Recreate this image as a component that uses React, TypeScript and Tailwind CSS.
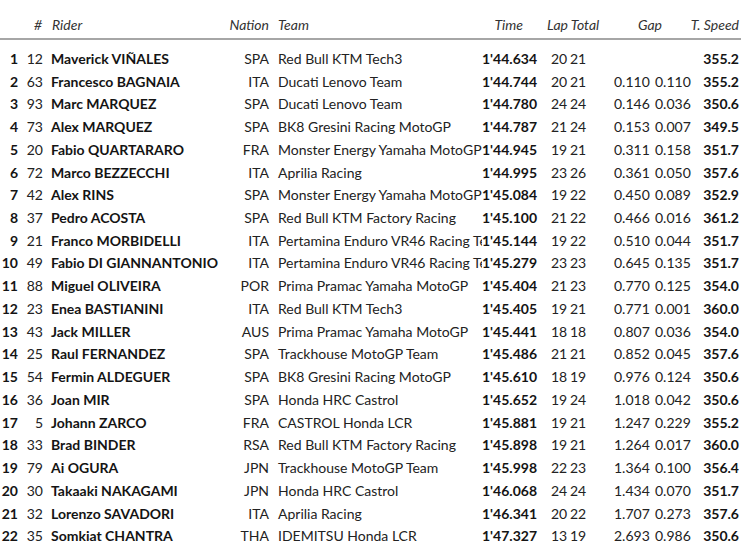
const rows: [number, number, string, string, string, string, number, number, string, string, string][] = [
  [1, 12, "Maverick VIÑALES", "SPA", "Red Bull KTM Tech3", "1'44.634", 20, 21, "", "", "355.2"],
  [2, 63, "Francesco BAGNAIA", "ITA", "Ducati Lenovo Team", "1'44.744", 20, 21, "0.110", "0.110", "355.2"],
  [3, 93, "Marc MARQUEZ", "SPA", "Ducati Lenovo Team", "1'44.780", 24, 24, "0.146", "0.036", "350.6"],
  [4, 73, "Alex MARQUEZ", "SPA", "BK8 Gresini Racing MotoGP", "1'44.787", 21, 24, "0.153", "0.007", "349.5"],
  [5, 20, "Fabio QUARTARARO", "FRA", "Monster Energy Yamaha MotoGP", "1'44.945", 19, 21, "0.311", "0.158", "351.7"],
  [6, 72, "Marco BEZZECCHI", "ITA", "Aprilia Racing", "1'44.995", 23, 26, "0.361", "0.050", "357.6"],
  [7, 42, "Alex RINS", "SPA", "Monster Energy Yamaha MotoGP", "1'45.084", 19, 22, "0.450", "0.089", "352.9"],
  [8, 37, "Pedro ACOSTA", "SPA", "Red Bull KTM Factory Racing", "1'45.100", 21, 22, "0.466", "0.016", "361.2"],
  [9, 21, "Franco MORBIDELLI", "ITA", "Pertamina Enduro VR46 Racing Team", "1'45.144", 19, 22, "0.510", "0.044", "351.7"],
  [10, 49, "Fabio DI GIANNANTONIO", "ITA", "Pertamina Enduro VR46 Racing Team", "1'45.279", 23, 23, "0.645", "0.135", "351.7"],
  [11, 88, "Miguel OLIVEIRA", "POR", "Prima Pramac Yamaha MotoGP", "1'45.404", 21, 23, "0.770", "0.125", "354.0"],
  [12, 23, "Enea BASTIANINI", "ITA", "Red Bull KTM Tech3", "1'45.405", 19, 21, "0.771", "0.001", "360.0"],
  [13, 43, "Jack MILLER", "AUS", "Prima Pramac Yamaha MotoGP", "1'45.441", 18, 18, "0.807", "0.036", "354.0"],
  [14, 25, "Raul FERNANDEZ", "SPA", "Trackhouse MotoGP Team", "1'45.486", 21, 21, "0.852", "0.045", "357.6"],
  [15, 54, "Fermin ALDEGUER", "SPA", "BK8 Gresini Racing MotoGP", "1'45.610", 18, 19, "0.976", "0.124", "350.6"],
  [16, 36, "Joan MIR", "SPA", "Honda HRC Castrol", "1'45.652", 19, 24, "1.018", "0.042", "350.6"],
  [17, 5, "Johann ZARCO", "FRA", "CASTROL Honda LCR", "1'45.881", 19, 21, "1.247", "0.229", "355.2"],
  [18, 33, "Brad BINDER", "RSA", "Red Bull KTM Factory Racing", "1'45.898", 19, 21, "1.264", "0.017", "360.0"],
  [19, 79, "Ai OGURA", "JPN", "Trackhouse MotoGP Team", "1'45.998", 22, 23, "1.364", "0.100", "356.4"],
  [20, 30, "Takaaki NAKAGAMI", "JPN", "Honda HRC Castrol", "1'46.068", 24, 24, "1.434", "0.070", "351.7"],
  [21, 32, "Lorenzo SAVADORI", "ITA", "Aprilia Racing", "1'46.341", 20, 22, "1.707", "0.273", "357.6"],
  [22, 35, "Somkiat CHANTRA", "THA", "IDEMITSU Honda LCR", "1'47.327", 13, 19, "2.693", "0.986", "350.6"],
]

export default function App() {
  return (
    <div className="h-[551px] w-[745px] overflow-hidden bg-white text-[14px] text-[#141414]" style={{ fontFamily: "Lato, 'Open Sans', sans-serif" }}>
      {/* header */}
      <div className="grid h-[38px] grid-cols-[43px_183px_43px_211px_67px_54px_61px_77px] items-end pb-[3px] italic text-[#333]">
        <div className="pr-px text-right">#</div>
        <div className="pl-[9px]">Rider</div>
        <div className="text-right">Nation</div>
        <div className="pl-[9px]">Team</div>
        <div className="pr-[24px] text-right">Time</div>
        <div>Lap Total</div>
        <div className="text-right">Gap</div>
        <div className="text-right">T. Speed</div>
      </div>
      <div className="h-[2px] w-[741px] bg-[#a6a6a6]" />

      <div className="pt-[7px]">
        {rows.map((r) => (
          <div
            key={r[0]}
            className="grid h-[22.74px] grid-cols-[18px_25px_183px_43px_213px_69px_19px_44px_41px_45px_39px] items-center whitespace-nowrap"
          >
            <div className="text-right font-bold">{r[0]}</div>
            <div className="text-right text-[#222]">{r[1]}</div>
            <div className="pl-[8px] font-bold">{r[2]}</div>
            <div className="text-right text-[#222]">{r[3]}</div>
            <div className="overflow-hidden pl-[9px] text-[#222]">{r[4]}</div>
            <div className="font-bold">{r[5]}</div>
            <div className="text-[#222]">{r[6]}</div>
            <div className="text-[#222]">{r[7]}</div>
            <div className="text-[#222]">{r[8]}</div>
            <div className="text-[#222]">{r[9]}</div>
            <div className="text-right font-bold">{r[10]}</div>
          </div>
        ))}
      </div>
    </div>
  )
}
